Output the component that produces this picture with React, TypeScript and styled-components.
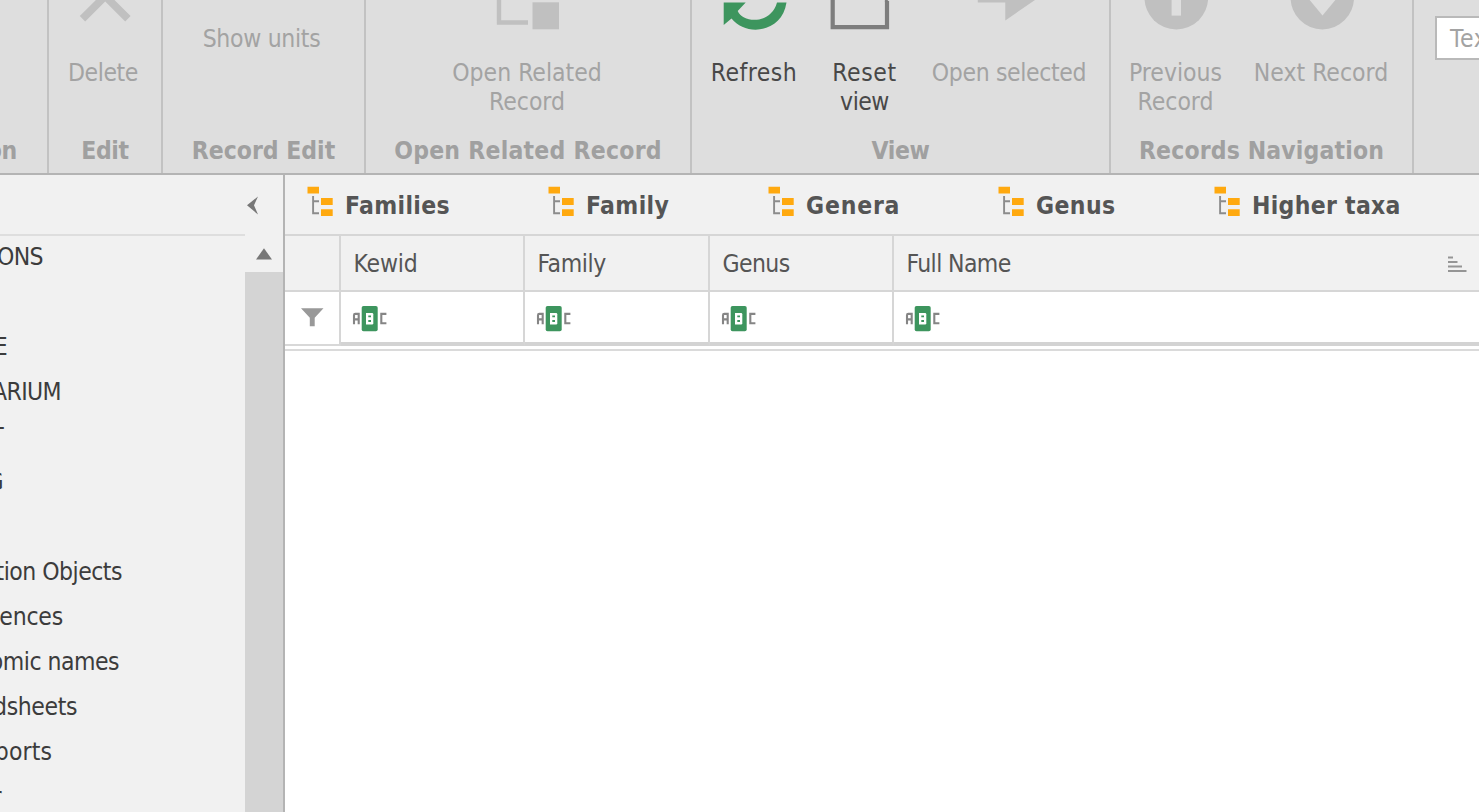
import React from "react";
import styled, { createGlobalStyle } from "styled-components";

const GlobalStyle = createGlobalStyle`
  *, *::before, *::after { box-sizing: border-box; }
  html, body { margin: 0; padding: 0; overflow: hidden; }
  svg { display: block; flex: none; }
`;

const Screen = styled.div`
  width: 1479px;
  height: 812px;
  overflow: hidden;
  display: flex;
  flex-direction: column;
  background: #fff;
  font-family: "DejaVu Sans Condensed", "DejaVu Sans", sans-serif;
  font-stretch: condensed;
  font-size: 24.5px;
  line-height: 29px;
  color: #555;
  white-space: nowrap;
`;

/* Ribbon */

const Ribbon = styled.header`
  flex: none;
  display: flex;
  height: 175px;
  background: #dedede;
  border-bottom: 2px solid #b4b4b4;
`;

const Group = styled.section<{ $width: number }>`
  flex: none;
  width: ${(p) => p.$width}px;
  display: flex;
  flex-direction: column;
  border-right: 2px solid #c2c2c2;
  overflow: hidden;
`;

const GroupBody = styled.div<{ $top?: number; $left?: number }>`
  flex: 1;
  display: flex;
  padding-top: ${(p) => p.$top ?? 0}px;
  padding-left: ${(p) => p.$left ?? 0}px;
`;

const Caption = styled.div<{ $ls?: number; $end?: number }>`
  height: 37px;
  display: flex;
  justify-content: ${(p) => (p.$end === undefined ? "center" : "flex-end")};
  padding-right: ${(p) => p.$end ?? 0}px;
  font-weight: bold;
  color: #a0a0a0;
  letter-spacing: ${(p) => p.$ls ?? 0}px;
`;

const RibbonButton = styled.div<{ $width: number; $enabled?: boolean; $ls?: number }>`
  width: ${(p) => p.$width}px;
  display: flex;
  flex-direction: column;
  align-items: center;
  color: ${(p) => (p.$enabled ? "#484848" : "#a3a3a3")};
  letter-spacing: ${(p) => p.$ls ?? 0}px;

  svg { margin-bottom: 26px; }
`;

const TightLine = styled.span`
  letter-spacing: -0.5px;
`;

const SearchBox = styled.div`
  flex: 1;
  margin: 16px 0 0 21px;
  height: 44px;
  border: 2px solid #b9b9b9;
  border-right: 0;
  background: #fff;
  padding: 6px 0 0 13px;
  color: #a3a3a3;
  letter-spacing: 0.6px;
  overflow: hidden;
`;

/* Sidebar */

const Body = styled.div`
  flex: 1;
  display: flex;
  min-height: 0;
`;

const Sidebar = styled.aside`
  flex: none;
  width: 285px;
  display: flex;
  flex-direction: column;
  background: #f1f1f1;
  border-right: 2px solid #b4b4b4;
`;

const SidebarHead = styled.div`
  flex: none;
  height: 59px;
  display: flex;
  justify-content: flex-end;
  padding: 21px 24px 0 0;
`;

const SidebarBody = styled.div`
  flex: 1;
  display: flex;
  min-height: 0;
`;

const NavList = styled.div`
  width: 245px;
  border-top: 2px solid #dedede;
  overflow: hidden;
`;

const NavRow = styled.div<{ $end: number; $ls?: number }>`
  width: ${(p) => p.$end}px;
  height: 45px;
  display: flex;
  justify-content: flex-end;
  padding-top: 6px;
  color: #3c3c3c;
  letter-spacing: ${(p) => p.$ls ?? -0.6}px;
`;

const Scrollbar = styled.div`
  flex: 1;
  display: flex;
  flex-direction: column;
`;

const ScrollUp = styled.div`
  height: 38px;
  padding: 14px 0 0 11px;
`;

const ScrollTrack = styled.div`
  flex: 1;
  background: #d4d4d4;
`;

/* Main area */

const Main = styled.main`
  flex: 1;
  min-width: 0;
  display: flex;
  flex-direction: column;
`;

const Tabs = styled.nav`
  flex: none;
  height: 61px;
  display: flex;
  padding-left: 22px;
  background: #f1f1f1;
  border-bottom: 2px solid #d6d6d6;
`;

const Tab = styled.div<{ $width: number; $ls: number }>`
  flex: none;
  width: ${(p) => p.$width}px;
  display: flex;
  padding-top: 11px;
  font-weight: bold;
  color: #555;
  letter-spacing: ${(p) => p.$ls}px;

  svg { margin-right: 11px; }
  span { padding-top: 5px; }
`;

const GridRow = styled.div`
  display: grid;
  grid-template-columns: 56px 184px 185px 184px 1fr;
`;

const HeaderRow = styled(GridRow)`
  height: 56px;
  background: #f1f1f1;
  border-bottom: 2px solid #d6d6d6;
`;

const HeaderCell = styled.div<{ $ls?: number }>`
  display: flex;
  justify-content: space-between;
  padding: 13px 12px 0 12.5px;
  border-right: 2px solid #d6d6d6;
  letter-spacing: ${(p) => p.$ls ?? -0.6}px;

  &:last-child { border-right: 0; }
  svg { margin-top: 7px; }
`;

const FilterRow = styled(GridRow)`
  height: 54px;
`;

const FilterCell = styled.div`
  padding: 14px 0 0 11px;
  border-right: 2px solid #d6d6d6;
  border-bottom: 4px solid #d3d3d3;

  &:last-child { border-right: 0; }
`;

const FunnelCell = styled.div`
  padding: 16px 0 0 16px;
  border-right: 2px solid #d6d6d6;
  border-bottom: 2px solid #d8d8d8;
`;

const GridEnd = styled.div`
  height: 5px;
  border-bottom: 2px solid #dadada;
`;

const TreeIcon = () => (
  <svg width="27" height="32" viewBox="0 0 27 32">
    <path d="M6.1 10V27.3H12M6.1 15.3H12" fill="none" stroke="#8c8c8c" strokeWidth="1.9" />
    <path d="M.5 .8H12V7.5H.5ZM14 12H25.7V19H14ZM14 23.2H25.7V30H14Z" fill="#ffa90f" />
  </svg>
);

const AbcIcon = () => (
  <svg width="38" height="26" viewBox="0 0 38 26" fill="none" strokeWidth="2.1">
    <rect x="9.7" y="0" width="16" height="25.2" rx="1.8" fill="#3d955e" />
    <path d="M2 18.3V9.2Q2 7.9 3.3 7.9H6.7V18.3M2 13.4H6.7" stroke="#858585" />
    <path d="M14 7H20Q21.3 7 21.3 8.3V17.2Q21.3 18.4 20 18.4H14Z" fill="#fff" />
    <path d="M16.3 9.4H19V11.3H16.3ZM16.3 14.1H19V16H16.3Z" fill="#3d955e" />
    <path d="M34.4 7.9H29.3V17.3H34.4" stroke="#858585" />
  </svg>
);

const columns = [
  { title: "Kewid", ls: -0.2 },
  { title: "Family", ls: -0.4 },
  { title: "Genus", ls: -0.6 },
];

const tabs = [
  { title: "Families", width: 241, ls: 0.35 },
  { title: "Family", width: 220, ls: 0.4 },
  { title: "Genera", width: 230, ls: 0.8 },
  { title: "Genus", width: 216, ls: 0.4 },
  { title: "Higher taxa", width: 240, ls: 0.3 },
];

const navItems = [
  { text: "ONS", end: 43 },
  { text: "", end: 0 },
  { text: "E", end: 7 },
  { text: "ARIUM", end: 61 },
  { text: "T", end: 3 },
  { text: "G", end: 3 },
  { text: "", end: 0 },
  { text: "tion Objects", end: 122, ls: -0.5 },
  { text: "ences", end: 63, ls: -0.2 },
  { text: "omic names", end: 119, ls: -0.5 },
  { text: "dsheets", end: 77, ls: -0.4 },
  { text: "ports", end: 52, ls: 0.1 },
  { text: "r", end: 1 },
];

export default function App() {
  return (
    <Screen>
      <GlobalStyle />
      <Ribbon>
        <Group $width={49}>
          <GroupBody />
          <Caption $end={30} $ls={-0.3}>on</Caption>
        </Group>
        <Group $width={114}>
          <GroupBody>
            <RibbonButton $width={108} $ls={-0.4}>
              <svg width="58" height="32" viewBox="0 0 58 32">
                <path
                  d="M8.5 18.8L31.2 -3.9L53.9 18.8"
                  fill="none"
                  stroke="#c0c0c0"
                  strokeWidth="7.6"
                />
              </svg>
              Delete
            </RibbonButton>
          </GroupBody>
          <Caption $ls={-0.3}>Edit</Caption>
        </Group>
        <Group $width={203}>
          <GroupBody $top={24}>
            <RibbonButton $width={197} $ls={-0.3}>Show units</RibbonButton>
          </GroupBody>
          <Caption>Record Edit</Caption>
        </Group>
        <Group $width={326}>
          <GroupBody>
            <RibbonButton $width={322}>
              <svg width="64" height="32" viewBox="0 0 64 32">
                <path d="M4 0V22.5H33" fill="none" stroke="#c0c0c0" strokeWidth="4.4" />
                <rect x="37.5" y="2.3" width="26.5" height="27" fill="#c0c0c0" />
              </svg>
              <span>Open Related</span>
              <span>Record</span>
            </RibbonButton>
          </GroupBody>
          <Caption $ls={0.25}>Open Related Record</Caption>
        </Group>
        <Group $width={419}>
          <GroupBody $left={5}>
            <RibbonButton $width={114} $enabled $ls={0.5}>
              <svg width="66" height="32" viewBox="0 0 66 32">
                <path d="M2.7 2.5H24.7L16.7 11C22 23.5 50 24.5 56 2.5H65.5C61 33 25 37 10.5 18.5L2.7 25Z" fill="#3d955e" />
              </svg>
              Refresh
            </RibbonButton>
            <RibbonButton $width={107} $enabled $ls={0.6}>
              <svg width="70" height="32" viewBox="0 0 70 32">
                <path d="M2.7 -2V27.1H57V1" fill="none" stroke="#7d7d7d" strokeWidth="4.2" />
                <path d="M54.9 0H57.5L59.1 1.8H54.9Z" fill="#7d7d7d" />
              </svg>
              <span>Reset</span>
              <TightLine>view</TightLine>
            </RibbonButton>
            <RibbonButton $width={182} $ls={-0.35}>
              <svg width="64" height="32" viewBox="0 0 64 32">
                <path d="M.8 0H58L28.3 20.5V2.5H.8Z" fill="#c0c0c0" />
              </svg>
              Open selected
            </RibbonButton>
          </GroupBody>
          <Caption $ls={-0.4}>View</Caption>
        </Group>
        <Group $width={303}>
          <GroupBody $left={2}>
            <RibbonButton $width={125}>
              <svg width="64" height="32" viewBox="0 0 64 32">
                <circle cx="32.3" cy="-2.3" r="31.8" fill="#c0c0c0" />
                <rect x="27.6" y="-4" width="9.4" height="19.6" fill="#dedede" />
              </svg>
              <span>Previous</span>
              <span>Record</span>
            </RibbonButton>
            <RibbonButton $width={166}>
              <svg width="66" height="32" viewBox="0 0 66 32">
                <circle cx="34.3" cy="-2.3" r="31.7" fill="#c0c0c0" />
                <path d="M20 -2H49L34.5 15.5Z" fill="#dedede" />
              </svg>
              Next Record
            </RibbonButton>
          </GroupBody>
          <Caption $ls={0.15}>Records Navigation</Caption>
        </Group>
        <SearchBox>Text to search</SearchBox>
      </Ribbon>

      <Body>
        <Sidebar>
          <SidebarHead>
            <svg width="13" height="19" viewBox="0 0 13 19">
              <path d="M12 .5L1 9.3L12 18.5L8 9.3Z" fill="#777" />
            </svg>
          </SidebarHead>
          <SidebarBody>
            <NavList>
              {navItems.map((item, i) => (
                <NavRow key={i} $end={item.end} $ls={item.ls}>
                  {item.text}
                </NavRow>
              ))}
            </NavList>
            <Scrollbar>
              <ScrollUp>
                <svg width="16" height="12" viewBox="0 0 16 12">
                  <path d="M8 .3L16 11.5H0Z" fill="#777" />
                </svg>
              </ScrollUp>
              <ScrollTrack />
            </Scrollbar>
          </SidebarBody>
        </Sidebar>

        <Main>
          <Tabs>
            {tabs.map((t) => (
              <Tab key={t.title} $width={t.width} $ls={t.ls}>
                <TreeIcon />
                <span>{t.title}</span>
              </Tab>
            ))}
          </Tabs>
          <HeaderRow>
            <HeaderCell />
            {columns.map((c) => (
              <HeaderCell key={c.title} $ls={c.ls}>
                {c.title}
              </HeaderCell>
            ))}
            <HeaderCell>
              Full Name
              <svg width="19" height="18" viewBox="0 0 19 18">
                <path d="M0 1.5H5M0 6H9.5M0 10.5H14M0 15H18.5" stroke="#959595" strokeWidth="1.8" />
              </svg>
            </HeaderCell>
          </HeaderRow>
          <FilterRow>
            <FunnelCell>
              <svg width="23" height="20" viewBox="0 0 23 20">
                <path d="M0 .3H22.5L13.7 9.8V18.3H8.8V9.8Z" fill="#999" />
              </svg>
            </FunnelCell>
            <FilterCell><AbcIcon /></FilterCell>
            <FilterCell><AbcIcon /></FilterCell>
            <FilterCell><AbcIcon /></FilterCell>
            <FilterCell><AbcIcon /></FilterCell>
          </FilterRow>
          <GridEnd />
        </Main>
      </Body>
    </Screen>
  );
}
